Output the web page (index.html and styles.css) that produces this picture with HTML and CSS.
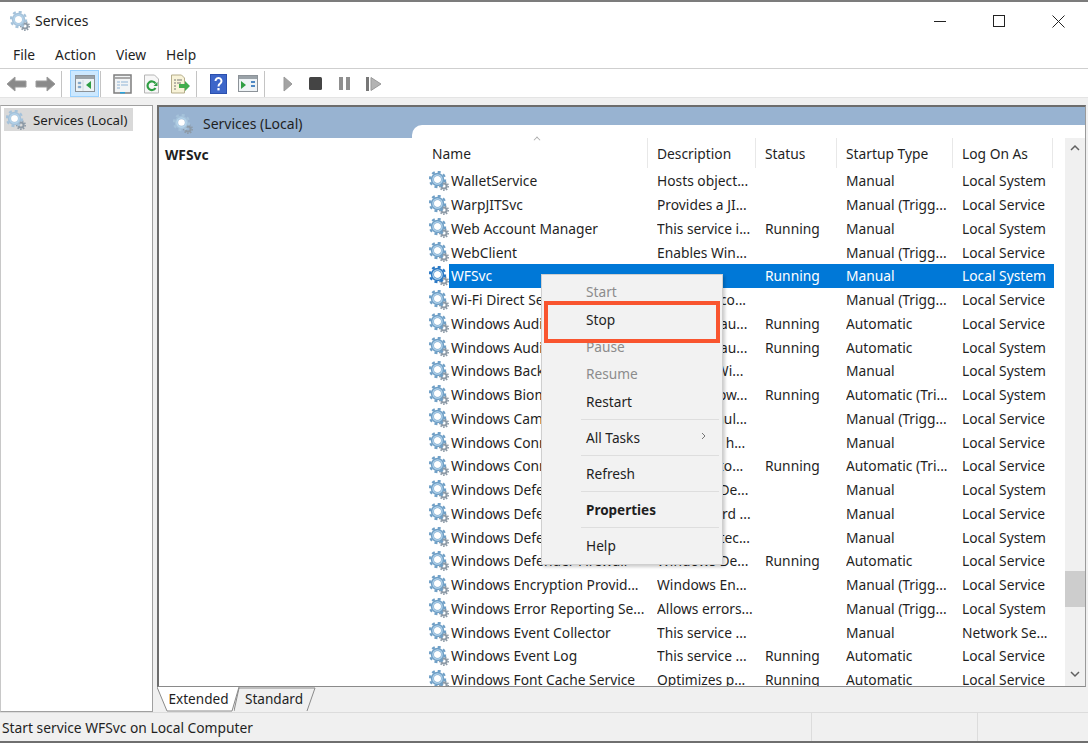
FILE: index.html
```html
<!doctype html>
<html>
<head>
	<meta charset="utf-8">
	<title>Services</title>
	<link rel="stylesheet" href="styles.css">
</head>
<body>

<svg class="defs" width="0" height="0">
	<defs>
		<symbol id="gear" viewBox="0 0 20 20">
			<circle cx="15" cy="15" r="2.6" fill="none" stroke="#8d9aa6" stroke-width="2"/>
			<circle cx="15" cy="15" r="4.2" fill="none" stroke="#8d9aa6" stroke-width="1.6" stroke-dasharray="1.5 1.4"/>
			<circle cx="8.5" cy="8.5" r="7.6" fill="none" stroke="currentColor" stroke-width="2.2" stroke-dasharray="3 2.97"/>
			<circle cx="8.5" cy="8.5" r="5" fill="none" stroke="currentColor" stroke-width="3.4"/>
			<circle cx="8.500" cy="8.500" r="4.600" fill="none" stroke="#b6d5ec" stroke-width="1.300"/>
			<circle cx="8.5" cy="8.5" r="3.3" fill="#fff"/>
		</symbol>
	</defs>
</svg>

<div class="window">

	<!-- title -->
	<div class="titlebar">
		<svg class="gear gear-faded"><use href="#gear"/></svg>
		<span class="title">Services</span>
		<div class="winctl">
			<svg width="13" height="13" viewBox="0 0 13 13"><path d="M0 6.5h12" stroke="#222" fill="none"/></svg>
			<svg width="13" height="13" viewBox="0 0 13 13"><rect x=".5" y=".5" width="11" height="11" stroke="#222" fill="none"/></svg>
			<svg width="13" height="13" viewBox="0 0 13 13"><path d="M.5.5l12 12M12.500.5l-12 12" stroke="#222" fill="none"/></svg>
		</div>
	</div>

	<ul class="menubar">
		<li>File</li>
		<li>Action</li>
		<li>View</li>
		<li>Help</li>
	</ul>

	<!-- toolbar -->
	<div class="toolbar">
		<div class="tb first"><svg width="21" height="18" viewBox="0 0 21 18"><path d="M1 9l8-7v4h11v6H9v4z" fill="#8a8a8a" stroke="#9c9c9c"/></svg></div>
		<div class="tb"><svg width="21" height="18" viewBox="0 0 21 18"><path d="M20 9l-8-7v4H1v6h11v4z" fill="#8a8a8a" stroke="#9c9c9c"/></svg></div>
		<i class="sep s1"></i>
		<div class="tb on"><svg width="20" height="17" viewBox="0 0 20 17"><rect x=".5" y=".5" width="19" height="16" fill="#eef3f6" stroke="#8c9298"/><path d="M1 1h18v3H1z" fill="#9aa2a8"/><path d="M3 7h3v2H3zM3 11h3v2H3zM8 5v11" fill="#6c9fd0" stroke="#b5c0c8" stroke-width=".5"/><path d="M16 6v8l-5-4z" fill="#2f9e44"/></svg></div>
		<i class="sep s2"></i>
		<div class="tb after"><svg width="19" height="20" viewBox="0 0 19 20"><rect x="1" y="1" width="17" height="18" fill="#f2f4f5" stroke="#7d7d7d" stroke-width="1.500"/><path d="M2 4h15" stroke="#a9a9a9" stroke-width="2"/><path d="M4 8h3M4 11h3M4 14h3M8 8h7M8 11h7" stroke="#8fb4d6"/><path d="M7 18h5v1.500H7z" fill="#29a3dd"/></svg></div>
		<div class="tb"><svg width="17" height="20" viewBox="0 0 17 20"><path d="M1.500 1h10l4 4v14h-14z" fill="#f7f7f7" stroke="#b5b5b5"/><path d="M12.500 9.500a4.300 4.300 0 1 0 0 4.500" fill="none" stroke="#2f9e44" stroke-width="2.200"/><path d="M14.500 8v4h-4z" fill="#2f9e44"/></svg></div>
		<div class="tb"><svg width="21" height="20" viewBox="0 0 21 20"><path d="M1.500 1h10l3 3v15h-13z" fill="#f8f3d8" stroke="#b5ad8a"/><path d="M4 6h2M7 6h5M4 9h2M7 9h4M4 12h2M4 15h2" stroke="#777"/><path d="M9 10h6V7l5 5-5 5v-3H9z" fill="#43ad4c"/></svg></div>
		<i class="sep s3"></i>
		<div class="tb after"><svg width="17" height="20" viewBox="0 0 17 20"><rect width="17" height="20" fill="#2b50ae"/><rect x="1" y="1" width="15" height="18" fill="#3d66c9"/><path d="M5.500 7a3 3 0 1 1 4.500 2.600c-1.200.7-1.500 1.200-1.500 2.900" fill="none" stroke="#fff" stroke-width="2"/><rect x="7.400" y="14" width="2.200" height="2.400" fill="#fff"/></svg></div>
		<div class="tb"><svg width="20" height="17" viewBox="0 0 20 17"><rect x=".5" y=".5" width="19" height="16" fill="#eef3f6" stroke="#8c9298"/><path d="M1 1h18v3H1z" fill="#9aa2a8"/><path d="M3 6v8l5-4z" fill="#2f9e44"/><path d="M13 6h4v2h-4zM13 10h4v2h-4z" fill="#4d88c4"/></svg></div>
		<i class="sep s4"></i>
		<div class="tb mid first-mid"><svg width="10" height="16" viewBox="0 0 10 16"><path d="M1 1l8 7-8 7z" fill="#a3a3a3" stroke="#9a9a9a"/></svg></div>
		<div class="tb mid tb-stop"><svg width="13" height="13" viewBox="0 0 13 13"><rect width="13" height="13" rx="1.500" fill="#444"/></svg></div>
		<div class="tb mid"><svg width="11" height="13" viewBox="0 0 11 13"><path d="M0 0h4v13H0zM7 0h4v13H7z" fill="#8f8f8f"/></svg></div>
		<div class="tb mid tb-resume"><svg width="16" height="14" viewBox="0 0 16 14"><path d="M0 0h3v14H0z" fill="#777"/><path d="M5 .5l10 6.500-10 6.500z" fill="#b3b3b3" stroke="#999"/></svg></div>
	</div>

	<div class="gap"></div>

	<!-- panes -->
	<div class="panes">
		<div class="tree">
			<div class="tree-item">
				<svg class="gear gear-faded"><use href="#gear"/></svg>
				<span>Services (Local)</span>
			</div>
		</div>

		<div class="main">
			<div class="content">
				<div class="band">
					<svg class="gear gear-faded"><use href="#gear"/></svg>
					<span>Services (Local)</span>
				</div>
				<div class="body">
					<div class="detail">WFSvc</div>
					<div class="listpane">
						<div class="list">
							<div class="list-head">
								<span class="c-name">Name<em class="sort"></em></span>
								<span class="c-desc">Description</span>
								<span class="c-stat">Status</span>
								<span class="c-type">Startup Type</span>
								<span class="c-log">Log On As</span>
							</div>
							<div class="rows">
								<div class="row"><svg class="gear"><use href="#gear"/></svg><div class="cells"><span>WalletService</span><span>Hosts object...</span><span></span><span>Manual</span><span>Local System</span></div></div>
								<div class="row"><svg class="gear"><use href="#gear"/></svg><div class="cells"><span>WarpJITSvc</span><span>Provides a JI...</span><span></span><span>Manual (Trigg...</span><span>Local Service</span></div></div>
								<div class="row"><svg class="gear"><use href="#gear"/></svg><div class="cells"><span>Web Account Manager</span><span>This service i...</span><span>Running</span><span>Manual</span><span>Local System</span></div></div>
								<div class="row"><svg class="gear"><use href="#gear"/></svg><div class="cells"><span>WebClient</span><span>Enables Win...</span><span></span><span>Manual (Trigg...</span><span>Local Service</span></div></div>
								<div class="row selected"><svg class="gear"><use href="#gear"/></svg><div class="cells"><span>WFSvc</span><span></span><span>Running</span><span>Manual</span><span>Local System</span></div></div>
								<div class="row"><svg class="gear"><use href="#gear"/></svg><div class="cells"><span>Wi-Fi Direct Services Con...</span><span>Manages co...</span><span></span><span>Manual (Trigg...</span><span>Local Service</span></div></div>
								<div class="row"><svg class="gear"><use href="#gear"/></svg><div class="cells"><span>Windows Audio</span><span>Manages au...</span><span>Running</span><span>Automatic</span><span>Local Service</span></div></div>
								<div class="row"><svg class="gear"><use href="#gear"/></svg><div class="cells"><span>Windows Audio Endpoint B...</span><span>Manages au...</span><span>Running</span><span>Automatic</span><span>Local System</span></div></div>
								<div class="row"><svg class="gear"><use href="#gear"/></svg><div class="cells"><span>Windows Backup</span><span>Provides Wi...</span><span></span><span>Manual</span><span>Local System</span></div></div>
								<div class="row"><svg class="gear"><use href="#gear"/></svg><div class="cells"><span>Windows Biometric Service</span><span>The Window...</span><span>Running</span><span>Automatic (Tri...</span><span>Local System</span></div></div>
								<div class="row"><svg class="gear"><use href="#gear"/></svg><div class="cells"><span>Windows Camera Frame Se...</span><span>Enables mul...</span><span></span><span>Manual (Trigg...</span><span>Local Service</span></div></div>
								<div class="row"><svg class="gear"><use href="#gear"/></svg><div class="cells"><span>Windows Connect Now</span><span>WCNCSVC h...</span><span></span><span>Manual</span><span>Local Service</span></div></div>
								<div class="row"><svg class="gear"><use href="#gear"/></svg><div class="cells"><span>Windows Connection Mana...</span><span>Makes auto...</span><span>Running</span><span>Automatic (Tri...</span><span>Local Service</span></div></div>
								<div class="row"><svg class="gear"><use href="#gear"/></svg><div class="cells"><span>Windows Defender Advanc...</span><span>Windows De...</span><span></span><span>Manual</span><span>Local System</span></div></div>
								<div class="row"><svg class="gear"><use href="#gear"/></svg><div class="cells"><span>Windows Defender Antivir...</span><span>Helps guard ...</span><span></span><span>Manual</span><span>Local Service</span></div></div>
								<div class="row"><svg class="gear"><use href="#gear"/></svg><div class="cells"><span>Windows Defender Antivir...</span><span>Helps protec...</span><span></span><span>Manual</span><span>Local System</span></div></div>
								<div class="row"><svg class="gear"><use href="#gear"/></svg><div class="cells"><span>Windows Defender Firewall</span><span>Windows De...</span><span>Running</span><span>Automatic</span><span>Local Service</span></div></div>
								<div class="row"><svg class="gear"><use href="#gear"/></svg><div class="cells"><span>Windows Encryption Provid...</span><span>Windows En...</span><span></span><span>Manual (Trigg...</span><span>Local Service</span></div></div>
								<div class="row"><svg class="gear"><use href="#gear"/></svg><div class="cells"><span>Windows Error Reporting Se...</span><span>Allows errors...</span><span></span><span>Manual (Trigg...</span><span>Local System</span></div></div>
								<div class="row"><svg class="gear"><use href="#gear"/></svg><div class="cells"><span>Windows Event Collector</span><span>This service ...</span><span></span><span>Manual</span><span>Network Se...</span></div></div>
								<div class="row"><svg class="gear"><use href="#gear"/></svg><div class="cells"><span>Windows Event Log</span><span>This service ...</span><span>Running</span><span>Automatic</span><span>Local Service</span></div></div>
								<div class="row"><svg class="gear"><use href="#gear"/></svg><div class="cells"><span>Windows Font Cache Service</span><span>Optimizes p...</span><span>Running</span><span>Automatic</span><span>Local Service</span></div></div>
							</div>
						</div>
						<div class="scrollbar">
							<svg width="10" height="7" viewBox="0 0 10 7"><path d="M1 6l4-4 4 4" fill="none" stroke="#606060" stroke-width="1.500"/></svg>
							<div class="track"><div class="thumb"></div></div>
							<svg width="10" height="7" viewBox="0 0 10 7"><path d="M1 1l4 4 4-4" fill="none" stroke="#606060" stroke-width="1.500"/></svg>
						</div>
					</div>
				</div>
			</div>
			<div class="tabs">
				<div class="tab tab-on">
					<svg viewBox="0 0 85 25" width="85" height="25"><path d="M0 0l10 24h65l7-24" fill="#fff" stroke="#8a8a8a"/></svg>
					<span>Extended</span>
				</div>
				<div class="tab tab-std">
					<svg viewBox="0 0 85 25" width="85" height="25"><path d="M0 24L5 1h76l-8 23" fill="#f0f0f0" stroke="#8a8a8a"/></svg>
					<span>Standard</span>
				</div>
			</div>
		</div>
	</div>

	<div class="statusbar">
		<span class="st-msg">Start service WFSvc on Local Computer</span>
		<span class="st-a"></span>
		<span class="st-b"></span>
	</div>
</div>

<!-- context menu -->
<div class="ctx">
	<div class="ctx-item off">Start</div>
	<div class="ctx-item">Stop</div>
	<div class="ctx-item off">Pause</div>
	<div class="ctx-item off">Resume</div>
	<div class="ctx-item">Restart</div>
	<div class="ctx-line"></div>
	<div class="ctx-item">All Tasks<svg class="more" width="6" height="8" viewBox="0 0 6 8"><path d="M1 1l3 3-3 3" fill="none" stroke="#777"/></svg></div>
	<div class="ctx-line"></div>
	<div class="ctx-item">Refresh</div>
	<div class="ctx-line"></div>
	<div class="ctx-item bold">Properties</div>
	<div class="ctx-line"></div>
	<div class="ctx-item">Help</div>
	<div class="mark"></div>
</div>

</body>
</html>
```

FILE: styles.css
```css
*{margin:0;padding:0;box-sizing:border-box;}
html,body{height:743px;overflow:hidden;}
body{background:#fff;font-family:"Noto Sans","Open Sans",sans-serif;font-size:13.8px;color:#1f1f1f;position:relative;}
.defs{position:absolute;}

.window{height:743px;display:flex;flex-direction:column;border-top:2px solid #7c7c7c;border-bottom:2px solid #6f6f6f;}

.gear{width:20px;height:20px;color:#6f9fc6;flex:none;}
.gear-faded{color:#a5c2da;}

/* title */
.titlebar{height:39px;display:flex;align-items:center;padding:0 0 2px 10px;font-size:14px;}
.title{margin-left:5px;}
.winctl{margin:2px 0 0 auto;display:flex;gap:46px;padding-right:23px;}

.menubar{height:28px;display:flex;list-style:none;padding-left:13px;border-bottom:1px solid #cfcfcf;align-items:center;}
.menubar li{margin-right:20px;}

/* toolbar */
.toolbar{height:28px;display:flex;align-items:center;padding:1px 0 0 2px;}
.tb{width:29px;height:27px;display:flex;align-items:center;justify-content:center;border:1px solid transparent;}
.tb.on{background:#cce8ff;border-color:#99d1ff;margin-left:8px;}
.tb.after{margin-left:7px;}
.tb.mid{width:28px;}
.tb.first-mid{margin-left:9px;}
.tb.tb-stop{margin:0 1px 0 -1px;}
.tb.tb-resume{margin-left:2px;}
.sep{width:1px;height:26px;background:#c4c4c4;}
.s1{margin-left:1px;}
.s2{margin-left:1px;}
.s3{margin-left:1px;}
.s4{margin-left:2px;}

.gap{height:8px;background:#f0f0f0;border-top:1px solid #e4e4e4;}

/* panes */
.panes{flex:1;display:flex;background:#f0f0f0;min-height:0;}
.tree{width:153px;background:#fff;border:1px solid #a0a0a0;border-left-color:#c8c8c8;padding:2px 3px;font-size:13.3px;}
.tree-item{width:129px;height:23px;background:#d9d9d9;display:flex;align-items:center;gap:7px;padding-left:2px;white-space:nowrap;}

.main{flex:1;margin-left:4px;display:flex;flex-direction:column;min-width:0;padding-right:2px;}
.content{flex:1;display:flex;flex-direction:column;min-height:0;background:#fff;border:2px solid #6d6d6d;border-right:1px solid #9a9a9a;border-bottom:1px solid #8a8a8a;}
.band{height:31px;background:#98b3d1;display:flex;align-items:center;gap:10px;padding:2px 0 0 14px;flex:none;font-size:14px;}
.body{flex:1;display:flex;min-height:0;background:#fff;}
.detail{width:253px;padding:7px 0 0 6px;font-weight:700;flex:none;}
.listpane{flex:1;display:flex;margin-top:-13px;background:#fff;border-top-left-radius:10px;min-width:0;position:relative;}
.list{flex:1;min-width:0;overflow:hidden;padding-top:13px;}

/* tall head so the first row sits below the notch */
.list-head{height:31px;display:grid;grid-template-columns:236px 108px 81px 116px 100px;}
.list-head span{border-right:1px solid #e8e8e8;padding:6px 0 0 9px;white-space:nowrap;height:30px;}
.list-head .c-name{padding-left:20px;position:relative;}
.sort{position:absolute;left:122px;top:-1px;width:6px;height:6px;border-left:1px solid #aaa;border-top:1px solid #aaa;transform:rotate(45deg) scale(.8);}

.row{height:23.75px;display:flex;align-items:center;padding-left:17px;}
.cells{width:605px;height:100%;display:grid;grid-template-columns:208px 108px 81px 116px 92px;align-items:center;}
.cells span{white-space:nowrap;overflow:hidden;line-height:23px;}
.cells span:first-child{padding-left:2px;}
.selected .cells{background:#0078d7;color:#fff;}
.selected .gear{color:#2a78c4;}

.scrollbar{width:20px;margin:13px 0 0 11px;background:#f0f0f0;display:flex;flex-direction:column;align-items:center;padding:6px 0 8px;flex:none;}
.track{flex:1;width:100%;position:relative;}
.thumb{position:absolute;left:0;right:0;top:420px;height:36px;background:#cdcdcd;}

/* tabs */
.tabs{height:25px;display:flex;flex:none;font-size:13.6px;}
.tab{position:relative;width:77px;height:25px;padding-left:6px;text-align:center;line-height:24px;}
.tab svg{position:absolute;left:0;top:0;}
.tab span{position:relative;}
.tab-on{z-index:1;}
.tab-std{width:80px;padding-left:0;}

.statusbar{height:29px;display:flex;background:#f0f0f0;border-top:1px solid #dcdcdc;flex:none;}
.st-msg{width:812px;padding:5px 0 0 2px;border-right:1px solid #dcdcdc;white-space:nowrap;}
.st-a{width:166px;border-right:1px solid #dcdcdc;}

/* context menu */
.ctx{position:absolute;left:541px;top:274px;width:182px;height:291px;background:#f2f2f2;border:1px solid #cfcfcf;box-shadow:2px 2px 3px rgba(0,0,0,.2);padding-top:3.3px;font-size:13.7px;}
.ctx-item{height:27.4px;line-height:28px;padding-left:44px;position:relative;white-space:nowrap;}
.ctx-item.off{color:#8c8c8c;}
.ctx-item.bold{font-weight:700;font-size:13.5px;}
.more{position:absolute;right:15px;top:8px;}
.ctx-line{height:1px;margin:4px 3px 3.6px 39px;background:#dedede;}
.mark{position:absolute;left:2px;top:26px;width:176px;height:42px;border:4px solid #f9552f;}
```
